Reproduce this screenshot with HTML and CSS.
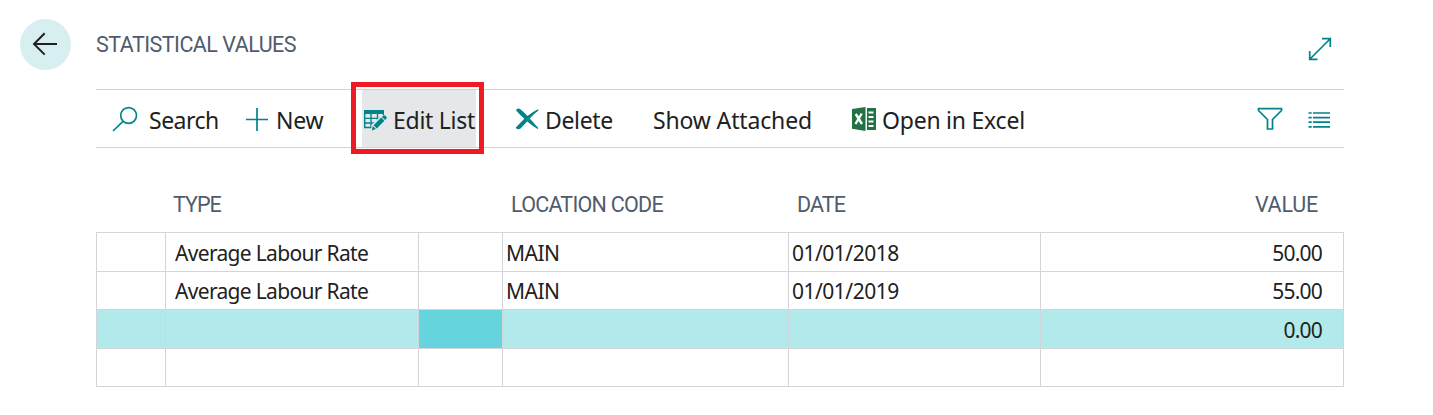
FILE: index.html
```
<!DOCTYPE html>
<html lang="en">
<head>
<meta charset="utf-8">
<title>Statistical Values</title>
<link rel="stylesheet" href="styles.css">
</head>
<body>
<div class="page">
  <a class="back" aria-label="Back"><svg width="51" height="51" viewBox="0 0 51 51"><path d="M37 25H14M24.7 14.2L14 25L24.7 35.6"/></svg></a>
  <main class="main">
    <header class="header">
      <h1 class="title">STATISTICAL VALUES</h1>
      <svg class="line-icon expand" width="24" height="24" viewBox="0 0 24 24"><path d="M2 22L22 2M14 1.7H22.3V10M1.7 14V22.3H9.5"/></svg>
    </header>
    <nav class="toolbar">
      <div class="action"><svg class="line-icon" width="37" height="26" viewBox="0 0 37 26"><circle cx="16.6" cy="9.5" r="7.9"/><path d="M11 15.3L1 25"/></svg><span class="t-search">Search</span></div>
      <div class="action"><svg class="line-icon" width="31" height="26" viewBox="0 0 31 26"><path d="M1 13.5H23M12 2V25"/></svg><span class="t-new">New</span></div>
      <div class="action active"><svg width="31" height="26" viewBox="0 0 31 26">
        <path class="teal-fill" d="M2 4H22V8H2Z"/>
        <path class="grid-lines" d="M2.7 7V21.5M9 7V21.5M15.5 7V17M21.3 7V11M2 12.4H18M2 17H13M2 21.5H10"/>
        <path class="halo" d="M9.5 19L20 8.8L25 10L24 14L14 25H9Z"/>
        <path class="teal-fill" d="M11.6 19.2L19.2 11.6L22.4 14.8L14.8 22.4ZM19.9 10.9L21.3 9.5Q22.6 8.9 24.2 10.6Q25.2 12 24.4 12.8L23.1 14.1ZM10.9 20.1L13.9 23.1L9.8 24.4Z"/></svg><span class="t-edit">Edit List</span></div>
      <div class="action"><svg width="30" height="26" viewBox="0 0 30 26"><path class="teal-fill" d="M1 4.2Q2 1.8 5 3Q9 6 12.5 10Q17 6 23 3.2L23.5 4.4Q18.5 8 14.7 12.4Q19 17 23.3 22L22.5 23Q17 19.5 12.2 15.4Q8.7 19 5.3 22.8Q2 24.2 .8 21.4Q5 17 9.3 12.7Q5 9 1 4.2Z"/></svg><span class="t-delete">Delete</span></div>
      <div class="action"><span class="t-show">Show Attached</span></div>
      <div class="action"><svg width="31" height="26" viewBox="0 0 31 26"><path class="excel" d="M1 3L14.5 1V25L1 22.7Z"/><path class="excel" d="M16 2H25V24H16Z"/><path class="excel-cells" d="M17.5 6.5H22.5M17.5 11H22.5M17.5 15.5H22.5M17.5 20H22.5"/><path class="excel-cross" d="M4.7 8L11 18M10.7 7.5L4.5 18"/></svg><span class="t-excel">Open in Excel</span></div>
      <div class="action"><svg class="line-icon" width="26" height="26" viewBox="0 0 26 26"><path d="M1.5 2.7H24.5V4.5L15.5 13.5V23H10.5V13.5L1.5 4.5Z"/></svg></div>
      <div class="action"><svg class="line-icon" width="24" height="26" viewBox="0 0 24 26"><path d="M.5 7H3.7M5 7H22M.5 11.7H3.7M5 11.7H22M.5 16.2H3.7M5 16.2H22M.5 20.8H3.7M5 20.8H22"/></svg></div>
    </nav>
    <div class="columns head">
      <span></span><span class="h-type">TYPE</span><span></span><span class="h-loc">LOCATION CODE</span><span class="h-date">DATE</span><span class="h-value">VALUE</span>
    </div>
    <div class="table">
      <div class="columns row"><span></span><span class="type">Average Labour Rate</span><span></span><span class="text">MAIN</span><span class="text">01/01/2018</span><span class="num">50.00</span></div>
      <div class="columns row short"><span></span><span class="type">Average Labour Rate</span><span></span><span class="text">MAIN</span><span class="text">01/01/2019</span><span class="num">55.00</span></div>
      <div class="columns row selected"><span></span><span></span><span class="focus"></span><span></span><span></span><span class="num">0.00</span></div>
      <div class="columns row short"><span></span><span></span><span></span><span></span><span></span><span></span></div>
    </div>
  </main>
</div>
</body>
</html>
```
FILE: styles.css
```
*, *::after { box-sizing: border-box; }
body { margin: 0; background: #fff; color: #212121; font-family: "Noto Sans", sans-serif; }
.page { display: flex; height: 415px; padding: 19px 89px 0 20px; }
.back { width: 51px; height: 51px; margin-right: 25px; border-radius: 50%; background: #d8eff1; flex: none; }
.back svg { display: block; fill: none; stroke: #212121; stroke-width: 2; }
.main { flex: 1; min-width: 0; }
.header { display: flex; justify-content: space-between; height: 70px; }
.title { margin: 0; padding-top: 12px; font: 400 21.5px/27px Roboto, sans-serif; letter-spacing: -.52px; color: #505c6d; white-space: nowrap; }
.expand { margin: 18px 12px 0 0; }
.line-icon { fill: none; stroke: #008489; stroke-width: 1.7; }
.toolbar { display: grid; grid-template-columns: 133px 117px 153px 137px 199px 406px 51px 36px; height: 59px; padding-left: 16px; border: solid #d2d3d6; border-width: 1px 0; }
.action { position: relative; display: flex; align-items: center; font-size: 23px; line-height: 32px; white-space: nowrap; }
.action svg { flex: none; }
.action span { padding-top: 2px; }
.t-search { letter-spacing: -.5px; }
.t-new { letter-spacing: -.3px; }
.t-edit { letter-spacing: -.27px; }
.t-delete { letter-spacing: -.35px; }
.t-show { padding-left: 1px; letter-spacing: -.15px; }
.t-excel { letter-spacing: -.23px; }
.active { width: 114px; background: #e6e7e9; }
.active::after { content: ""; position: absolute; left: -11px; top: -8px; width: 133px; height: 72px; border: 5px solid #ed1c24; }
.teal-fill { fill: #008489; }
.grid-lines { fill: none; stroke: #008489; stroke-width: 1.4; }
.halo { fill: #e6e7e9; }
.excel { fill: #217346; }
.excel-cells { stroke: #fff; stroke-width: 2.2; }
.excel-cross { stroke: #fff; stroke-width: 2.4; }
.columns { display: grid; grid-template-columns: 69px 253px 84px 286px 252px 303px; }
.head { height: 84px; padding: 43px 0 0 1px; font: 400 21.5px/27px Roboto, sans-serif; color: #505c6d; white-space: nowrap; }
.h-type, .h-loc, .h-date { padding-left: 8px; }
.h-type { padding-left: 7px; letter-spacing: -1px; }
.h-loc { letter-spacing: -.75px; }
.h-date { letter-spacing: -.9px; }
.h-value { text-align: right; padding-right: 26px; letter-spacing: -.2px; }
.table { border: solid #d2d5da; border-width: 1px 0 0 1px; }
.row { height: 39px; grid-template-rows: 100%; font-size: 21px; line-height: 38px; }
.short { height: 38px; line-height: 36px; }
.row > span { border: solid #d2d5da; border-width: 0 1px 1px 0; padding-top: 1px; white-space: nowrap; }
.row > .type { padding-left: 9px; letter-spacing: -.68px; }
.row > .text { padding-left: 3px; letter-spacing: -.5px; }
.row > .num { padding-right: 21px; text-align: right; letter-spacing: -.8px; }
.selected { background: #b2e9ea; }
.row > .focus { background: #66d4dc; }
```
